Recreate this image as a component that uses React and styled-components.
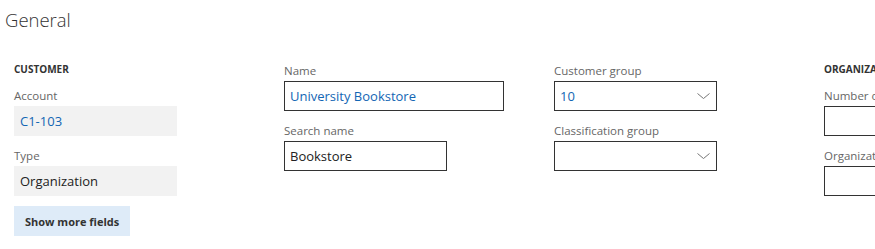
import React from "react";
import styled, { createGlobalStyle } from "styled-components";

const GlobalStyle = createGlobalStyle`
  html, body {
    margin: 0;
    padding: 0;
    background: #ffffff;
    overflow: hidden;
  }
  body {
    font-family: "Segoe UI", "Open Sans", "Noto Sans", sans-serif;
    color: #333333;
  }
`;

const Page = styled.div`
  width: 875px;
  height: 249px;
  overflow: hidden;
`;

const Title = styled.h1`
  margin: 0;
  padding: 7px 0 0 5px;
  height: 55px;
  box-sizing: border-box;
  font-size: 18.5px;
  font-weight: 300;
  line-height: 26px;
  color: #333333;
`;

const Columns = styled.div`
  display: grid;
  grid-template-columns: repeat(4, 270px);
  padding-left: 14px;
  padding-top: 6px;
`;

const Column = styled.div`
  display: flex;
  flex-direction: column;
  gap: 10px;
`;

const GroupTitle = styled.div`
  height: 15px;
  font-size: 10px;
  font-weight: 700;
  line-height: 17px;
  color: #333333;
  text-transform: uppercase;
  white-space: nowrap;
`;

const Field = styled.div`
  display: flex;
  flex-direction: column;
`;

const Label = styled.label`
  height: 20px;
  font-size: 11.5px;
  line-height: 19px;
  color: #666666;
  white-space: nowrap;
`;

const Box = styled.div`
  width: ${({ width }) => width}px;
  height: 30px;
  box-sizing: border-box;
  display: flex;
  align-items: center;
  justify-content: space-between;
  padding: 0 6px 0 ${({ readOnly }) => (readOnly ? 6 : 5)}px;
  background: ${({ readOnly }) => (readOnly ? "#f2f2f2" : "#ffffff")};
  border: ${({ readOnly }) => (readOnly ? "none" : "1px solid #333333")};
  font-size: 13px;
  color: ${({ link }) => (link ? "#1366b4" : "#222222")};
  white-space: nowrap;
`;

const Chevron = styled.svg`
  width: 13px;
  height: 6px;
  flex: none;
`;

const MoreButton = styled.button`
  align-self: flex-start;
  height: 30px;
  padding: 0 11px;
  border: none;
  background: #deebf8;
  font-family: inherit;
  font-size: 11px;
  font-weight: 700;
  color: #333333;
  cursor: pointer;
`;

const Arrow = () => (
  <Chevron viewBox="0 0 13 6">
    <path d="M0.5 0.5 L6.5 5.5 L12.5 0.5" fill="none" stroke="#777777" strokeWidth="1" />
  </Chevron>
);

const App = () => (
  <Page>
    <GlobalStyle />
    <Title>General</Title>
    <Columns>
      <Column>
        <GroupTitle>Customer</GroupTitle>
        <Field>
          <Label>Account</Label>
          <Box width={163} readOnly link>C1-103</Box>
        </Field>
        <Field>
          <Label>Type</Label>
          <Box width={163} readOnly>Organization</Box>
        </Field>
        <MoreButton>Show more fields</MoreButton>
      </Column>
      <Column>
        <Field>
          <Label>Name</Label>
          <Box width={220} link>University Bookstore</Box>
        </Field>
        <Field>
          <Label>Search name</Label>
          <Box width={163}>Bookstore</Box>
        </Field>
      </Column>
      <Column>
        <Field>
          <Label>Customer group</Label>
          <Box width={163} link>
            10
            <Arrow />
          </Box>
        </Field>
        <Field>
          <Label>Classification group</Label>
          <Box width={163}>
            <span />
            <Arrow />
          </Box>
        </Field>
      </Column>
      <Column>
        <GroupTitle>Organization details</GroupTitle>
        <Field>
          <Label>Number of employees</Label>
          <Box width={163} />
        </Field>
        <Field>
          <Label>Organization number</Label>
          <Box width={163} />
        </Field>
      </Column>
    </Columns>
  </Page>
);

export default App;
